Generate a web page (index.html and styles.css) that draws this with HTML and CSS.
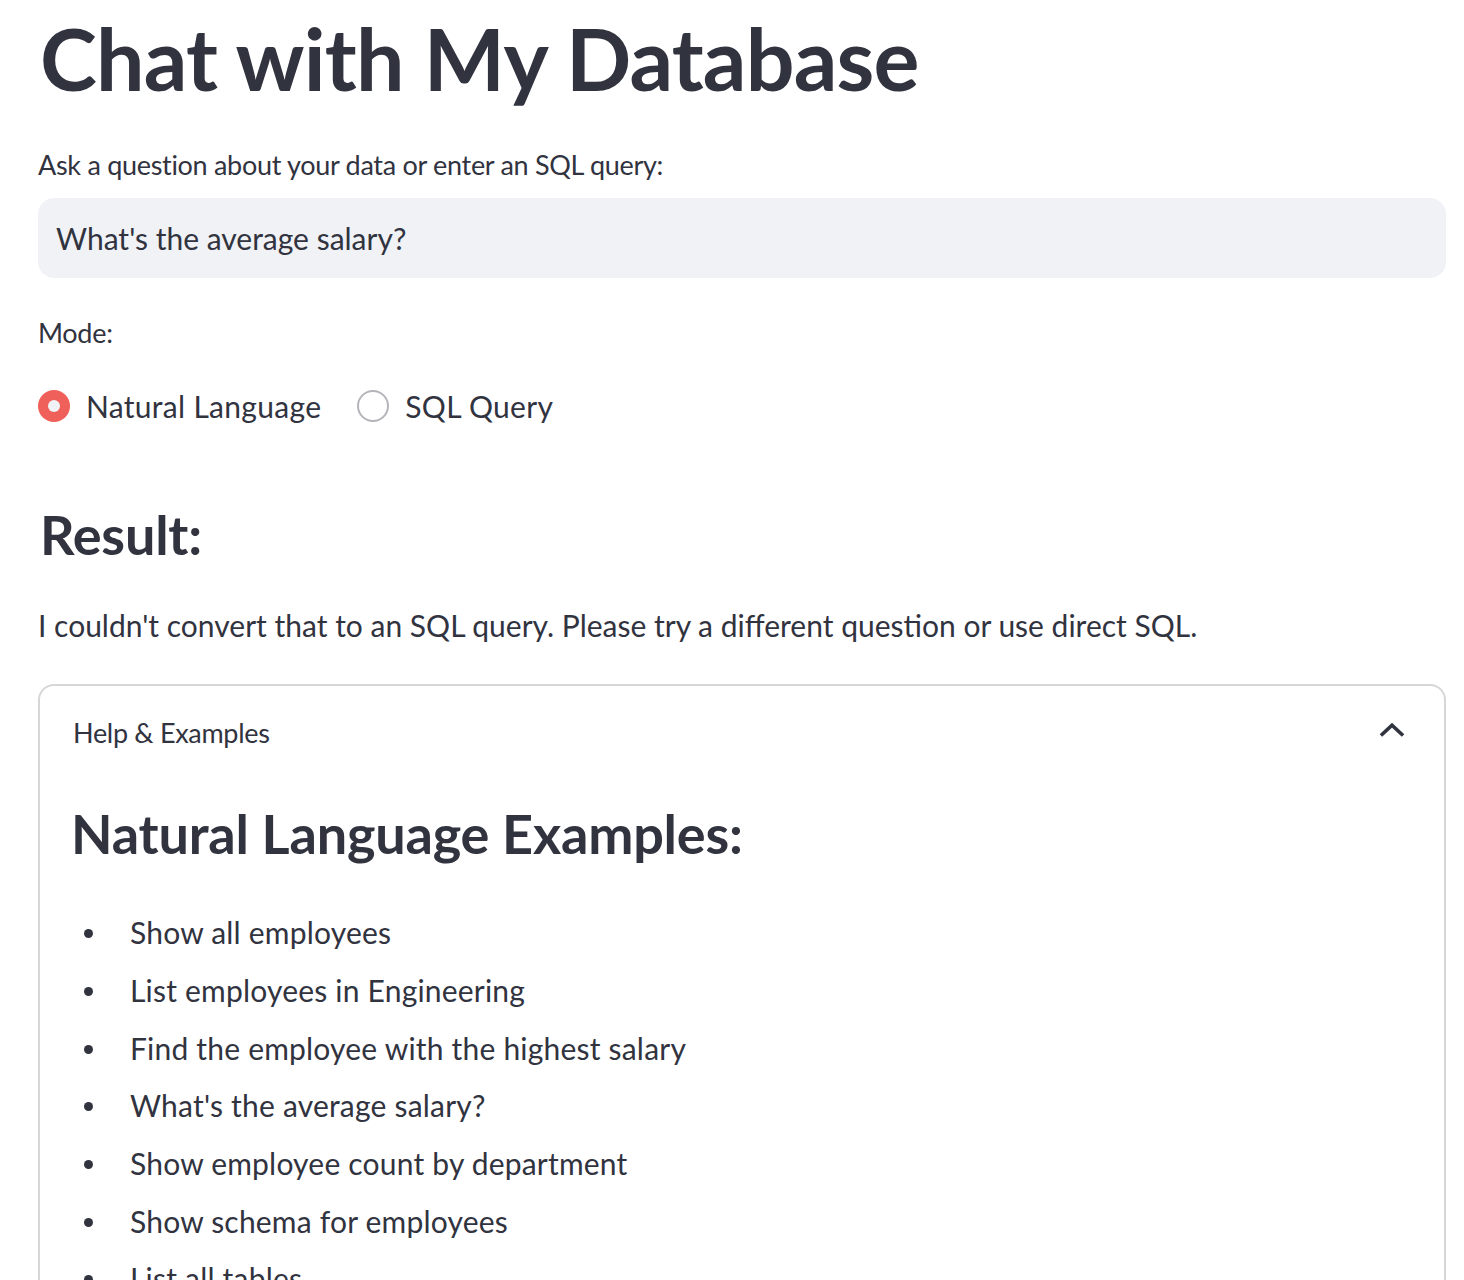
FILE: index.html
```html
<!DOCTYPE html>
<html lang="en">
<head>
<meta charset="utf-8">
<title>Chat with My Database</title>
<link rel="stylesheet" href="styles.css">
</head>
<body>
<main class="main">
  <h1 class="title">Chat with My Database</h1>

  <label class="field-label" for="q">Ask a question about your data or enter an SQL query:</label>
  <div class="input-box" id="q">What's the average salary?</div>

  <div class="field-label mode-label">Mode:</div>
  <div class="radio-group">
    <div class="radio-item">
      <span class="radio checked"><span class="radio-dot"></span></span>
      <span class="radio-text">Natural Language</span>
    </div>
    <div class="radio-item">
      <span class="radio"></span>
      <span class="radio-text">SQL Query</span>
    </div>
  </div>

  <h3 class="section-title">Result:</h3>
  <p class="body-text">I couldn't convert that to an SQL query. Please try a different question or use direct SQL.</p>

  <section class="expander">
    <div class="expander-header">
      <span class="expander-title">Help &amp; Examples</span>
      <svg class="chevron" width="24" height="24" viewBox="0 0 24 24" aria-hidden="true">
        <path d="M5.5 15.5 L12 9.5 L18.5 15.5" fill="none" stroke="#31333F" stroke-width="2.4" stroke-linecap="square" stroke-linejoin="miter"/>
      </svg>
    </div>
    <div class="expander-body">
      <h3 class="section-title inner">Natural Language Examples:</h3>
      <ul class="examples">
        <li>Show all employees</li>
        <li>List employees in Engineering</li>
        <li>Find the employee with the highest salary</li>
        <li>What's the average salary?</li>
        <li>Show employee count by department</li>
        <li>Show schema for employees</li>
        <li>List all tables</li>
      </ul>
    </div>
  </section>
</main>
</body>
</html>
```

FILE: styles.css
```css
html, body {
  margin: 0;
  padding: 0;
  background: #ffffff;
}

body {
  font-family: Lato, "Open Sans", "Noto Sans", sans-serif;
  color: #31333F;
}

.main {
  padding: 0 18px 0 38px;
}

.title {
  margin: 0;
  padding-top: 6px;
  padding-left: 2px;
  font-size: 86px;
  line-height: 1.2;
  font-weight: 700;
  letter-spacing: -0.8px;
}

.field-label {
  display: block;
  margin-top: 39px;
  font-size: 27px;
  line-height: 34px;
  letter-spacing: -0.3px;
}

.input-box {
  margin-top: 16px;
  height: 80px;
  box-sizing: border-box;
  padding: 0 18px;
  display: flex;
  align-items: center;
  background: #F0F2F6;
  border-radius: 16px;
  font-size: 30px;
}

.mode-label {
  margin-top: 38px;
}

.radio-group {
  display: flex;
  gap: 36px;
  margin-top: 34px;
  height: 44px;
  align-items: center;
}

.radio-item {
  display: flex;
  align-items: center;
  gap: 16px;
}

.radio {
  width: 32px;
  height: 32px;
  box-sizing: border-box;
  border-radius: 50%;
  border: 2px solid #B4B5BA;
  display: flex;
  align-items: center;
  justify-content: center;
}

.radio.checked {
  border: none;
  background: #F0605A;
}

.radio-dot {
  width: 12px;
  height: 12px;
  border-radius: 50%;
  background: #F0F2F6;
}

.radio-text {
  font-size: 30px;
  letter-spacing: 0.3px;
}

.section-title {
  margin: 75px 0 0 0;
  padding-left: 2px;
  font-size: 54px;
  line-height: 64px;
  font-weight: 700;
  letter-spacing: -0.2px;
}

.body-text {
  margin: 36px 0 0 0;
  font-size: 30px;
  line-height: 44px;
}

.expander {
  margin-top: 37px;
  border: 2px solid #D6D6D9;
  border-bottom: none;
  border-radius: 16px 16px 0 0;
  min-height: 620px;
}

.expander-header {
  display: flex;
  align-items: center;
  justify-content: space-between;
  padding: 0 34px 0 33px;
  height: 92px;
}

.expander-title {
  font-size: 27px;
  letter-spacing: -0.3px;
}

.chevron {
  width: 36px;
  height: 36px;
  margin-top: -6px;
}

.expander-body {
  padding: 0 33px;
}

.section-title.inner {
  margin-top: 24px;
  padding-left: 0;
  margin-left: -2px;
}

.examples {
  margin: 44px 0 0 0;
  padding: 0 0 0 57px;
  list-style: none;
}

.examples li {
  position: relative;
  font-size: 30px;
  line-height: 44px;
  margin-bottom: 13.7px;
  letter-spacing: 0.2px;
}

.examples li::before {
  content: "";
  position: absolute;
  left: -46px;
  top: 19px;
  width: 9px;
  height: 9px;
  border-radius: 50%;
  background: #31333F;
}
```
